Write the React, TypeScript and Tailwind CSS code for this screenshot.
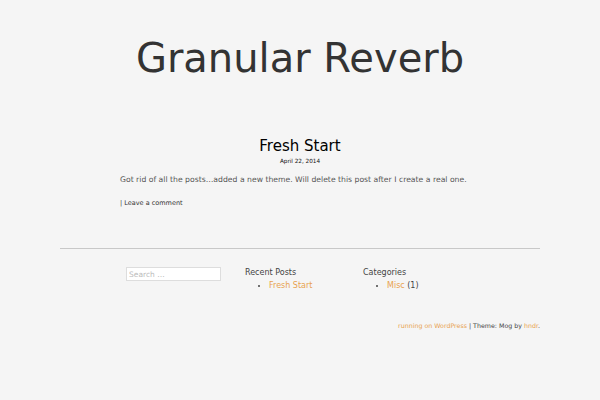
export default function App() {
  const body = { fontFamily: '"DejaVu Sans", sans-serif' };
  return (
    <div className="w-[600px] h-[400px] bg-[#f5f5f5] overflow-hidden" style={body}>
      <header className="pt-[32px] text-center">
        <h1 className="text-[40px] leading-[52px] text-[#333]">Granular Reverb</h1>
      </header>
      <main className="mx-[120px] mt-[51px]">
        <h2 className="text-center text-[15px] leading-[22px] text-[#000]">Fresh Start</h2>
        <div className="text-center text-[5.7px] leading-[8px] text-[#111]">April 22, 2014</div>
        <p className="text-[7.7px] leading-[12px] text-[#555] mt-[9px] whitespace-nowrap">Got rid of all the posts…added a new theme. Will delete this post after I create a real one.</p>
        <div className="text-[6.5px] leading-[10px] text-[#333] mt-[12px]">| Leave a comment</div>
      </main>
      <hr className="mx-[60px] mt-[40px] border-0 border-t border-[#c8c8c8]" />
      <div className="flex mt-[17px] ml-[126px]">
        <div className="w-[119px] pt-[1px]">
          <input className="block w-[95px] h-[14px] bg-white border border-[#ddd] text-[7.5px] px-[2px] outline-none placeholder:text-[#bbb]" placeholder="Search …" />
        </div>
        <div className="w-[118px] text-[8px] leading-[13px] text-[#444]">
          <div>Recent Posts</div>
          <ul className="list-disc pl-[24px]">
            <li><a className="text-[#e8a24f]">Fresh Start</a></li>
          </ul>
        </div>
        <div className="text-[8px] leading-[13px] text-[#444]">
          <div>Categories</div>
          <ul className="list-disc pl-[24px]">
            <li><a className="text-[#e8a24f]">Misc</a> (1)</li>
          </ul>
        </div>
      </div>
      <footer className="mx-[60px] mt-[29px] text-right text-[6.3px] leading-[10px] text-[#444]">
        <a className="text-[#e8a24f]">running on WordPress</a> | Theme: Mog by <a className="text-[#e8a24f]">hndr</a>.
      </footer>
    </div>
  );
}
